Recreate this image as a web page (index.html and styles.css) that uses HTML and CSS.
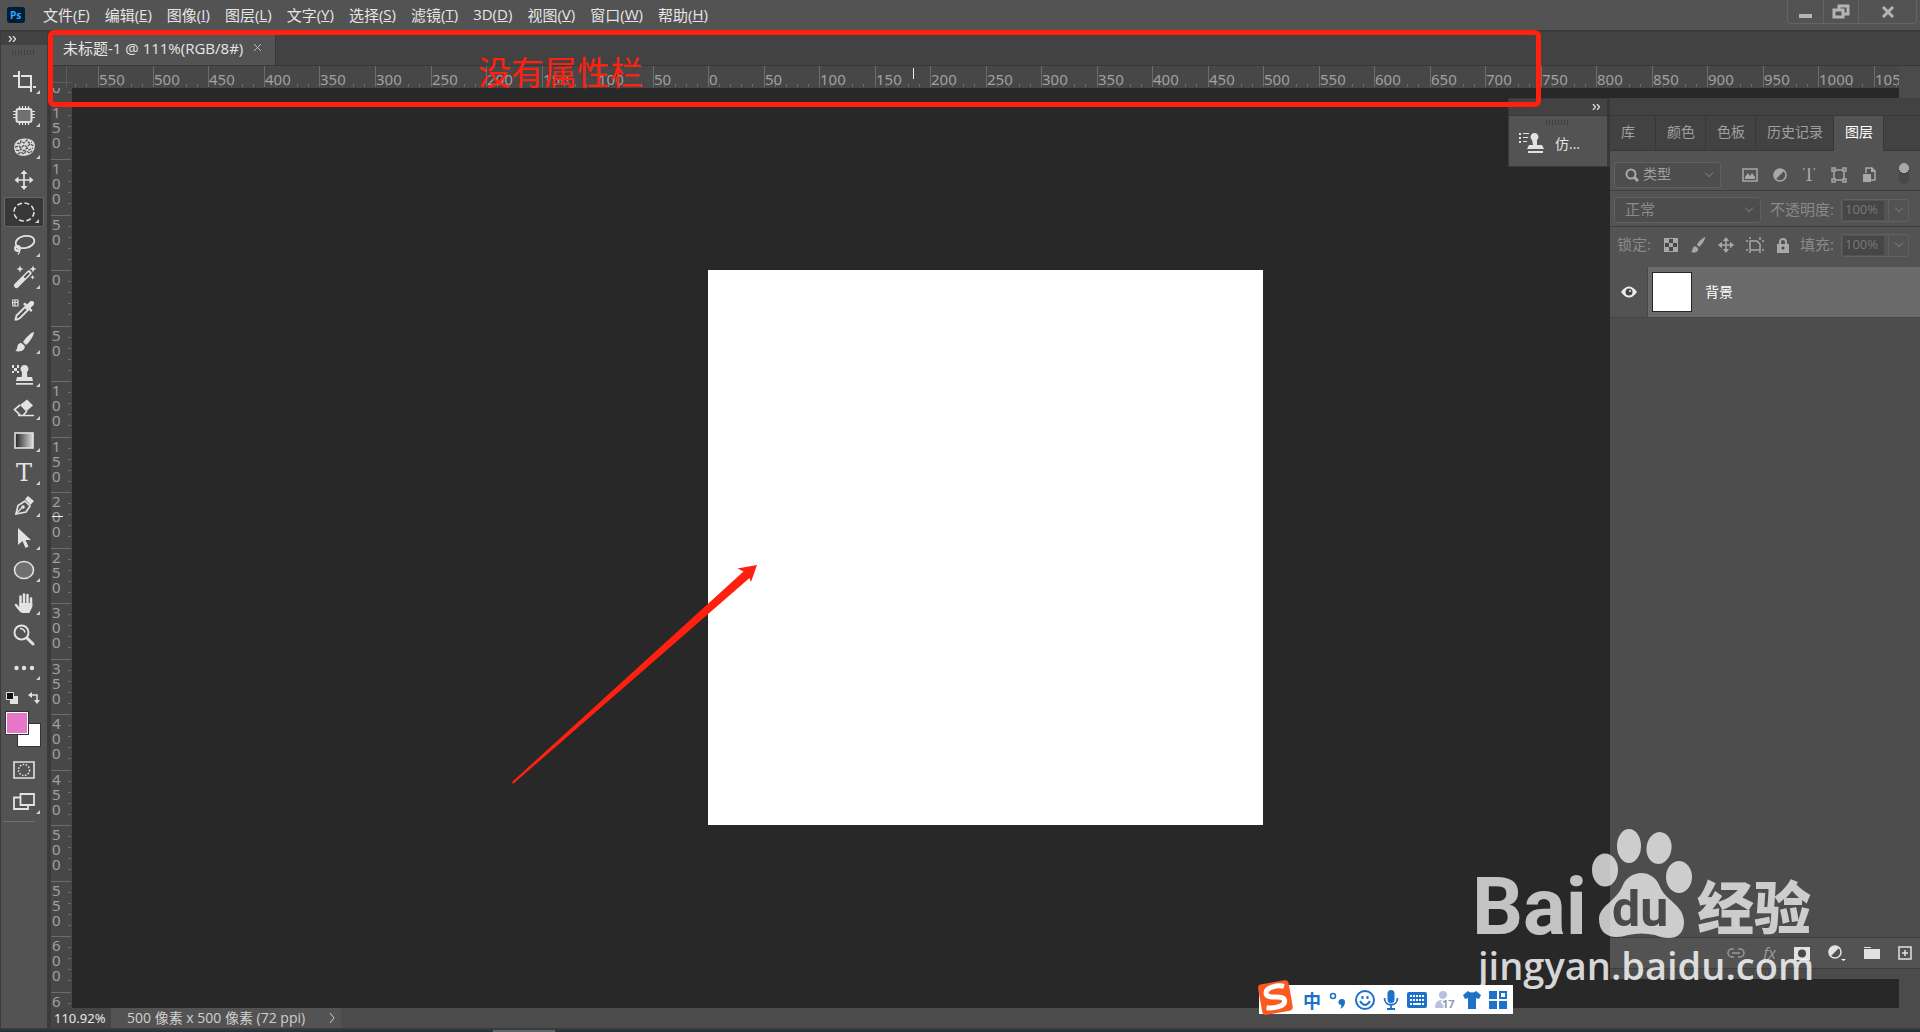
FILE: index.html
```html
<!DOCTYPE html>
<html lang="zh-CN">
<head>
    <meta charset="UTF-8">
    <meta name="viewport" content="width=device-width, initial-scale=1.0">
    <title>未标题-1 @ 111%(RGB/8#)</title>
    <link rel="stylesheet" href="styles.css">
</head>
<body>
    <!-- Menu bar -->
    <header class="menubar">
        <svg class="app-logo" width="18" height="16" viewBox="0 0 18 16"><rect width="18" height="16" rx="3" fill="#001e36"/><text x="3" y="12" font-size="10" font-weight="700" fill="#31a8ff">Ps</text></svg>
        <nav class="menu">
            <button>文件(<u>F</u>)</button>
            <button>编辑(<u>E</u>)</button>
            <button>图像(<u>I</u>)</button>
            <button>图层(<u>L</u>)</button>
            <button>文字(<u>Y</u>)</button>
            <button>选择(<u>S</u>)</button>
            <button>滤镜(<u>T</u>)</button>
            <button>3D(<u>D</u>)</button>
            <button>视图(<u>V</u>)</button>
            <button>窗口(<u>W</u>)</button>
            <button>帮助(<u>H</u>)</button>
        </nav>
        <div class="window-controls">
            <button aria-label="最小化"><svg width="14" height="14"><path d="M0 9h13v4H0z" fill="#b4b4b4"/></svg></button>
            <button aria-label="还原"><svg width="18" height="16" fill="none" stroke="#b4b4b4" stroke-width="3"><path d="M7 5V2h9v8h-4"/><path d="M2 6h9v7H2z"/></svg></button>
            <button class="close" aria-label="关闭"><svg width="14" height="12"><path d="M2 1l10 10M12 1L2 11" stroke="#b4b4b4" stroke-width="3"/></svg></button>
        </div>
    </header>

    <div class="workspace">
        <!-- Tools -->
        <aside class="toolbar">
            <button class="collapse" aria-label="折叠"><svg width="8" height="6"><path d="M1 0l2.500 3L1 6M5 0l2.500 3L5 6" fill="none" stroke="#ddd" stroke-width="1.300"/></svg></button>
            <div class="grip"></div>
            <div class="tools">
                <button class="tool more" aria-label="裁剪"><svg viewBox="0 0 24 24"><path d="M7 1v16h12M1 6h5M9 6h10v16M21 17h3" fill="none" stroke="#e2e2e2" stroke-width="2"/></svg></button>
                <button class="tool more" aria-label="修补"><svg viewBox="0 0 24 24"><rect x="4.500" y="6" width="15" height="13" rx="2" fill="#707070" stroke="#e2e2e2" stroke-width="2"/><path d="M7.500 3v3M10.500 3v3M13.500 3v3M16.500 3v3M7.500 19v3M10.500 19v3M13.500 19v3M16.500 19v3M1 8.500h3M1 11.500h3M1 14.500h3M20 8.500h3M20 11.500h3M20 14.500h3" stroke="#e2e2e2" stroke-width="1.200"/></svg></button>
                <button class="tool more" aria-label="海绵"><svg viewBox="0 0 24 24"><path d="M2 13Q2 4 12 3.500Q22 3 23 10Q23 20 12 21Q3 21 2 13z" fill="#dadada"/><g fill="none" stroke="#555" stroke-width="1.300"><path d="M5 8l3 1 1-3 3 2 3-3 2 3 3-1M3 12l4-1 2 2 3-3 3 2 3-3 4 2M4 15l3 1 2-2 3 2 3-3 2 2 4-2M6 19l3-2 3 2 2-3 4 2 2-2" stroke-dasharray="3 1"/></g></svg></button>
                <button class="tool" aria-label="移动"><svg viewBox="0 0 24 24"><path d="M12 4v16M4 12h16" stroke="#e2e2e2" stroke-width="1.700"/><path d="M12 2l3.500 4h-7zM12 22l3.500-4h-7zM2.500 12l4-3.500v7zM21.500 12l-4-3.500v7z" fill="#e2e2e2"/></svg></button>
                <button class="tool more selected" aria-label="椭圆选框"><svg viewBox="0 0 24 24"><ellipse cx="12" cy="12" rx="10" ry="9" fill="none" stroke="#e2e2e2" stroke-width="1.500" stroke-dasharray="5 2.500"/></svg></button>
                <button class="tool more" aria-label="套索"><svg viewBox="0 0 24 24" fill="none" stroke="#e2e2e2" stroke-width="1.800"><ellipse cx="13" cy="9" rx="9.500" ry="6" transform="rotate(-12 13 9)"/><circle cx="5.500" cy="15.500" r="2.500"/><path d="M3 14c5 0 6 4 3 7.500M8 14l-4 3" stroke-width="1.300"/></svg></button>
                <button class="tool more" aria-label="魔棒"><svg viewBox="0 0 24 24"><path d="M4.500 20.500L17 8" stroke="#e2e2e2" stroke-width="5" stroke-linecap="round"/><path d="M13 12l3.500-3.500" stroke="#535353" stroke-width="2.200" stroke-linecap="round"/><path d="M8 .5l1 2.500 2.500 1L9 5 8 7.500 7 5 4.500 4 7 3zM21 .5l1 2.500 2.500 1L22 5l-1 2.500L20 5l-2.500-1L20 3zM20.500 10l.7 1.500 1.500.7-1.500.7-.7 1.600-.7-1.600-1.500-.7 1.500-.7z" fill="#e2e2e2"/></svg></button>
                <button class="tool" aria-label="吸管"><svg viewBox="1 0 24 24"><path d="M4.500 21.500l1-4L14 9l3 3-8 8-3 1.500z" fill="none" stroke="#e2e2e2" stroke-width="1.800"/><path d="M12 6l8 8 1.500-1.500-2-2.500 3-3c2-3-1-5-3.500-3.500l-3 3-2-2z" fill="#e2e2e2"/><path d="M1 2h6v6H2zM4 2v6M1 4.500h6" fill="none" stroke="#e2e2e2" stroke-width="1.200"/></svg></button>
                <button class="tool more" aria-label="画笔"><svg viewBox="0 0 24 24"><path d="M22 2c-2 0-8 5-11 10l3 3c4-3 8-10 8-13zM9.500 13c-3 0-4 2-4.300 4.500-.2 2-1 3-2.200 3.300 5 1.700 10 0 9.800-4.800z" fill="#e2e2e2"/></svg></button>
                <button class="tool more" aria-label="仿制图章"><svg viewBox="1 0 24 24"><path d="M11 9a4 4 0 1 1 5 0l.3 5H21l1 4H5l1-4h4.700zM5 20h17v1.800H5z" fill="#e2e2e2"/><path d="M1 2h2v3H1zM6 2h2v3H6zM3 5h3v3H3zM1 8h2v2H1zM6 8h2v2H6z" fill="#e2e2e2"/></svg></button>
                <button class="tool more" aria-label="橡皮擦"><svg viewBox="0 0 24 24"><path d="M8 9l7-5.500 6 6-7 6z" fill="#e2e2e2"/><path d="M8 9l-5.500 4.500 6 6H11l4-4.500M6 19.500h16" fill="none" stroke="#e2e2e2" stroke-width="1.700"/></svg></button>
                <button class="tool more" aria-label="渐变"><svg viewBox="0 0 24 24"><defs><linearGradient id="grad"><stop stop-color="#222"/><stop offset="1" stop-color="#ddd"/></linearGradient></defs><rect x="3" y="5" width="18" height="15" fill="url(#grad)" stroke="#e2e2e2" stroke-width="1.600"/></svg></button>
                <button class="tool more" aria-label="文字"><svg viewBox="0 0 24 24"><text x="4" y="20" font-size="24" class="type-icon">T</text></svg></button>
                <button class="tool more" aria-label="钢笔"><svg viewBox="0 0 24 24"><path d="M4 21l2-8.500 7-4.500 5 5-4 6z" fill="none" stroke="#e2e2e2" stroke-width="1.700"/><path d="M4 21l6-6.500" stroke="#e2e2e2" stroke-width="1.300"/><circle cx="11" cy="14" r="1.800" fill="#e2e2e2"/><path d="M13 6l3-3 6 5-3.500 4z" fill="#e2e2e2"/></svg></button>
                <button class="tool more" aria-label="路径选择"><svg viewBox="0 0 24 24"><path d="M6 2l13 12h-5.500l3 6.500-3 1.500-3-7L6 19z" fill="#e2e2e2"/></svg></button>
                <button class="tool more" aria-label="椭圆"><svg viewBox="0 0 24 24"><ellipse cx="12" cy="12" rx="9.500" ry="8.500" fill="#707070" stroke="#e2e2e2" stroke-width="1.600"/></svg></button>
                <button class="tool more" aria-label="抓手"><svg viewBox="0 0 24 24"><path d="M9 20L4 14M8.500 14V5.500M12 13V3.500M15.500 13V4M19 14V7.500" fill="none" stroke="#e2e2e2" stroke-width="2.500" stroke-linecap="round"/><path d="M7.300 12h13v4l-3 6H10l-5-5 2.300-1z" fill="#e2e2e2"/></svg></button>
                <button class="tool" aria-label="缩放"><svg viewBox="0 0 24 24"><circle cx="9.500" cy="9.500" r="7" fill="none" stroke="#e2e2e2" stroke-width="2"/><path d="M8 5.500q4 0 5 4" fill="none" stroke="#e2e2e2" stroke-width="1.500"/><path d="M15 15l6 6" stroke="#e2e2e2" stroke-width="3" stroke-linecap="round"/></svg></button>
                <button class="tool more" aria-label="编辑工具栏"><svg viewBox="0 0 24 24" fill="#e2e2e2"><circle cx="4.500" cy="12" r="2.200"/><circle cx="12" cy="12" r="2.200"/><circle cx="20" cy="12" r="2.200"/></svg></button>
            </div>
            <div class="swatch-row">
                <button aria-label="默认颜色"><svg width="12" height="12"><path d="M4 4h8v8H4z" fill="#e2e2e2"/><path d="M.5.500h7v7h-7z" fill="#111" stroke="#e2e2e2"/></svg></button>
                <button aria-label="切换颜色"><svg width="12" height="12"><path d="M3 3h6v6" fill="none" stroke="#e2e2e2" stroke-width="1.500"/><path d="M0 3l4-3v6zM9 12L6 8h6z" fill="#e2e2e2"/></svg></button>
            </div>
            <div class="swatches">
                <button class="swatch back" aria-label="背景色"></button>
                <button class="swatch front" aria-label="前景色"></button>
            </div>
            <div class="modes">
                <button class="tool" aria-label="快速蒙版"><svg viewBox="0 0 24 24" fill="none" stroke="#e2e2e2"><path d="M2 4h20v16H2z" stroke-width="1.600"/><circle cx="12" cy="12" r="5.500" stroke-width="1.500" stroke-dasharray="1.500 1.500"/></svg></button>
                <button class="tool more" aria-label="屏幕模式"><svg viewBox="0 0 24 24" fill="none" stroke="#e2e2e2" stroke-width="1.800"><path d="M8 7.500H2V19h14v-4"/><path d="M8.500 4H22v11H8.500z"/></svg></button>
            </div>
            <hr>
        </aside>

        <!-- Document window -->
        <main class="document">
            <div class="tabs">
                <div class="doc-tab">未标题-1 @ 111%(RGB/8#)<button aria-label="关闭文档"><svg width="9" height="9"><path d="M1 1l7 7M8 1L1 8" stroke="#bbb"/></svg></button></div>
            </div>
            <div class="ruler-row">
                <div class="ruler-origin"></div>
                <svg id="ruler-x" class="ruler"></svg>
                <div class="ruler-end"></div>
            </div>
            <div class="stage">
                <svg id="ruler-y" class="ruler"></svg>
                <div class="artboard" id="artboard"></div>
                <div class="scrollbar"></div>

                <!-- Collapsed panel -->
                <section class="mini-dock">
                    <button class="collapse" aria-label="展开"><svg width="8" height="6"><path d="M1 0l2.500 3L1 6M5 0l2.500 3L5 6" fill="none" stroke="#ddd" stroke-width="1.300"/></svg></button>
                    <div class="mini-panel">
                        <div class="grip"></div>
                        <button><svg width="26" height="24" fill="#e2e2e2"><path d="M0 2h2v2H0zM4 2h6v1H4zM0 6h2v2H0zM4 6h5v1H4zM0 10h2v2H0zM4 10h4v1H4z"/><path d="M13 9a4 4 0 1 1 5 0v5h5l2 4H8l2-4h4zM9 20h15v2H9z"/></svg>仿...</button>
                    </div>
                </section>

                <!-- Layers panel -->
                <section class="dock">
                    <div class="dock-head"></div>
                    <div class="panel-tabs">
                        <button>库</button>
                        <button>颜色</button>
                        <button>色板</button>
                        <button>历史记录</button>
                        <button class="active">图层</button>
                    </div>
                    <div class="panel-row filter-row">
                        <label class="drop filter" aria-label="图层过滤"><svg width="14" height="14" fill="none" stroke="#a8a8a8"><circle cx="6" cy="6" r="4.500" stroke-width="2"/><path d="M9 9l4 4" stroke-width="3"/></svg><select><option>类型</option></select></label>
                        <div class="filter-icons">
                            <button aria-label="像素"><svg width="16" height="14"><path d="M1 1h14v12H1z" fill="none" stroke="#a8a8a8" stroke-width="1.500"/><path d="M3 11V9l3-4 2 3 2-3 3 4v2z" fill="#a8a8a8"/></svg></button>
                            <button aria-label="调整"><svg width="14" height="14"><circle cx="7" cy="7" r="6" fill="none" stroke="#a8a8a8" stroke-width="1.500"/><path d="M2.500 11.500a6 6 0 0 1 9-9z" fill="#a8a8a8"/></svg></button>
                            <button aria-label="文字图层"><svg width="14" height="14"><text x="1" y="13" font-size="18" class="type-icon dim">T</text></svg></button>
                            <button aria-label="形状"><svg width="16" height="16" fill="none" stroke="#a8a8a8" stroke-width="1.500"><path d="M3 3h10v10H3z"/><path d="M1 1h3v3H1zM12 1h3v3h-3zM1 12h3v3H1zM12 12h3v3h-3z" fill="#535353"/></svg></button>
                            <button aria-label="智能对象"><svg width="14" height="15"><path d="M4 6V1h6l3 3v9H9" fill="none" stroke="#a8a8a8" stroke-width="1.500"/><path d="M9 0v5h5M1 7h8v8H1z" fill="#a8a8a8"/></svg></button>
                        </div>
                        <input type="checkbox" class="switch" aria-label="过滤开关" checked>
                    </div>
                    <div class="panel-row">
                        <label class="drop blend" aria-label="混合模式"><select><option>正常</option></select></label>
                        <label class="dim-label" for="opacity">不透明度:</label>
                        <span class="percent"><input id="opacity" value="100%"><button aria-label="不透明度滑块"></button></span>
                    </div>
                    <div class="panel-row lock-row">
                        <span class="dim-label">锁定:</span>
                        <div class="lock-icons">
                            <button aria-label="锁定透明像素"><svg width="14" height="14"><path d="M0 0h14v14H0z" fill="#a8a8a8"/><path d="M5 1h4v4H5zM1 5h4v4H1zM9 5h4v4H9zM5 9h4v4H5z" fill="#484848"/></svg></button>
                            <button aria-label="锁定图像像素"><svg width="16" height="16" viewBox="2 1 21 21"><path d="M22 1c-2 0-8 5-11 10l3 3c4-3 8-10 8-13zM9.500 13c-3 0-4 2-4.300 4.500-.2 2-1 3-2.200 3.300 5 1.700 10 0 9.800-4.800z" fill="#a8a8a8"/></svg></button>
                            <button aria-label="锁定位置"><svg width="16" height="16" viewBox="2 2 20 20"><path d="M12 4v16M4 12h16" stroke="#a8a8a8" stroke-width="2"/><path d="M12 2l4 5H8zM12 22l4-5H8zM2 12l5-4v8zM22 12l-5-4v8z" fill="#a8a8a8"/></svg></button>
                            <button aria-label="防止嵌套"><svg width="18" height="16" fill="none" stroke="#a8a8a8" stroke-width="1.500"><path d="M4 0v2M0 4h2M4 4h7l3 3v6H4zM14 0v3M18 4h-2M4 14v2M14 14v2M0 13h2M16 13h2"/></svg></button>
                            <button aria-label="全部锁定"><svg width="14" height="15"><path d="M4 6V4a3 3 0 0 1 6 0v2" fill="none" stroke="#a8a8a8" stroke-width="2"/><path d="M1 6h12v9H1z" fill="#a8a8a8"/><circle cx="7" cy="10" r="1.500" fill="#484848"/></svg></button>
                        </div>
                        <label class="dim-label" for="fill">填充:</label>
                        <span class="percent"><input id="fill" value="100%"><button aria-label="填充滑块"></button></span>
                    </div>
                    <div class="layer">
                        <button class="eye" aria-label="可见性"><svg width="16" height="12"><path d="M0 6q8-11 16 0q-8 11-16 0z" fill="#eee"/><circle cx="8" cy="6" r="3.500" fill="#444"/><circle cx="9" cy="5" r="1" fill="#eee"/></svg></button>
                        <div class="layer-body"><span class="thumb"></span><span class="layer-name">背景</span></div>
                    </div>
                    <div class="layer-space"></div>
                    <div class="panel-foot">
                        <button aria-label="链接图层"><svg width="18" height="10" fill="none" stroke="#999" stroke-width="1.500"><path d="M7 1H5a4 4 0 0 0 0 8h2M11 1h2a4 4 0 0 1 0 8h-2M5 5h8"/></svg></button>
                        <button class="fx" aria-label="图层样式">fx</button>
                        <button aria-label="添加蒙版"><svg width="16" height="13"><path d="M0 0h16v13H0z" fill="#e2e2e2"/><circle cx="8" cy="6.500" r="4" fill="#484848"/></svg></button>
                        <button aria-label="调整图层"><svg width="18" height="16"><circle cx="7" cy="7" r="6" fill="none" stroke="#e2e2e2" stroke-width="1.500"/><path d="M2.500 11.500a6 6 0 0 1 9-9z" fill="#e2e2e2"/><path d="M13 14h5l-2.500 2z" fill="#fff"/></svg></button>
                        <button aria-label="新建组"><svg width="16" height="12"><path d="M0 0h7v1H0zM0 2h16v10H0z" fill="#e2e2e2"/></svg></button>
                        <button aria-label="新建图层"><svg width="14" height="14" fill="none" stroke="#e2e2e2" stroke-width="1.500"><path d="M1 1h12v12H1zM7 4v6M4 7h6"/></svg></button>
                    </div>
                    <div class="dock-end"><div class="grip"></div></div>
                </section>
            </div>
            <footer class="status">
                <input class="zoom-value" aria-label="缩放比例" value="110.92%">
                <div class="doc-size">500 像素 x 500 像素 (72 ppi)</div>
                <button aria-label="更多信息"><svg width="6" height="12"><path d="M1 1l4 5-4 5" fill="none" stroke="#ccc"/></svg></button>
            </footer>
        </main>
    </div>
    <div class="taskbar"><span></span></div>

    <!-- Annotations over the window -->
    <div class="note-box"><p>没有属性栏</p></div>
    <svg class="note-arrow" width="246" height="220"><path d="M0 217L231.500 6.500L225.500 3.500L245 0L239 17L237.500 13L1 219z" fill="#ff2010"/></svg>

    <svg class="watermark" width="350" height="180">
        <g fill="#fff" fill-opacity=".72">
            <ellipse cx="129" cy="59" rx="13" ry="16.500"/>
            <ellipse cx="153" cy="35" rx="12" ry="17"/>
            <ellipse cx="183" cy="37" rx="12.500" ry="16" transform="rotate(8 183 37)"/>
            <ellipse cx="203" cy="66" rx="13" ry="16"/>
            <path d="M146 76C153 58 177 57 184 76C190 90 208 94 208 111C208 128 193 130 179 124C170 122 161 122 152 124C137 129 123 125 123 108C123 95 140 90 146 76z"/>
            <text class="wm-bai" x="-4" y="123">Bai</text>
            <text class="wm-cn" x="221" y="118">经验</text>
        </g>
        <text class="wm-url" x="2" y="169">jingyan.baidu.com</text>
        <text class="wm-du" x="136" y="115">du</text>
    </svg>

    <!-- Input method bar -->
    <div class="ime">
        <svg class="ime-logo" width="38" height="38"><g transform="rotate(-10 19 19)"><rect x="3" y="3" width="31" height="31" rx="4" fill="#fa5a1e"/><path d="M29 9C22 6 10 7 10 13C10 20 27 16 27 23C27 29 15 29 8 27" fill="none" stroke="#fff" stroke-width="5"/></g></svg>
        <button aria-label="中文">中</button>
        <button aria-label="标点"><svg width="18" height="20"><circle cx="4" cy="6" r="2.500" fill="none" stroke="#1c72c8" stroke-width="1.500"/><path d="M13 9a3 3 0 0 1 3 3q0 5-5 7 2-3 1-4a3 3 0 0 1 1-6" fill="#1c72c8"/></svg></button>
        <button aria-label="表情"><svg width="20" height="20" fill="none" stroke="#1c72c8" stroke-width="2"><circle cx="10" cy="10" r="9"/><path d="M5 11q5 8 10 0M7.500 6v3M12.500 6v3"/></svg></button>
        <button aria-label="语音"><svg width="16" height="20"><rect x="4.500" width="7" height="13" rx="3.500" fill="#1c72c8"/><path d="M1.500 8c0 9 13 9 13 0M8 15v4M4 19h8" fill="none" stroke="#1c72c8" stroke-width="1.800"/></svg></button>
        <button aria-label="键盘"><svg width="20" height="16"><rect width="20" height="16" rx="2" fill="#1c72c8"/><path d="M3 4h14M3 8h14" stroke="#fff" stroke-width="2" stroke-dasharray="2 1"/><path d="M3 12h14" stroke="#fff" stroke-width="2" stroke-dasharray="2 1 8 1"/></svg></button>
        <button aria-label="账号"><svg width="20" height="20"><circle cx="8" cy="5" r="4" fill="#b8c2dc"/><path d="M0 18q0-9 8-8l4 1v7z" fill="#b8c2dc"/><text x="7" y="18" class="ime-level">17</text></svg></button>
        <button aria-label="皮肤"><svg width="18" height="18"><path d="M5 0q4 3 8 0l5 4-2 4-3-1v11H5V7L2 8 0 4z" fill="#1c72c8"/></svg></button>
        <button aria-label="工具箱"><svg width="18" height="18" fill="#1c72c8"><path d="M0 0h8v8H0zM0 10h8v8H0zM10 10h8v8h-8z"/><path d="M11 1h6v6h-6z" fill="none" stroke="#1c72c8" stroke-width="2"/></svg></button>
    </div>

    <script src="rulers.js"></script>
</body>
</html>
```
FILE: styles.css
```css
* {
    box-sizing: border-box;
}
body {
    margin: 0;
    min-height: 100vh;
    display: flex;
    flex-direction: column;
    position: relative;
    overflow: hidden;
    background: #282828;
    color: #e6e6e6;
    font-family: "Open Sans", "Noto Sans CJK SC", sans-serif;
    font-size: 14px;
}
button, input, select {
    margin: 0;
    padding: 0;
    border: none;
    background: none;
    color: inherit;
    font: inherit;
}
button {
    display: flex;
    align-items: center;
    justify-content: center;
}
svg {
    display: block;
    flex: none;
}

/* Menu bar */
.menubar {
    display: flex;
    align-items: center;
    height: 30px;
    padding-left: 7px;
    background: #535353;
}
.menu {
    display: flex;
    gap: 15px;
    height: 28px;
    margin-left: 18px;
    font-size: 15px;
}
.menu button {
    height: 26px;
}
.window-controls {
    display: flex;
    align-self: flex-start;
    height: 24px;
    margin-left: auto;
    margin-right: 3px;
    border: 1px solid #646464;
    border-top: none;
    border-radius: 0 0 4px 4px;
}
.window-controls button {
    width: 35px;
}
.window-controls button + button {
    border-left: 1px solid #646464;
}
.window-controls .close {
    width: 58px;
}

.workspace {
    display: flex;
    flex: 1;
    border-top: 2px solid #3a3a3a;
}

/* Tools */
.toolbar {
    width: 50px;
    background: #535353;
    border-left: 1px solid #3a3a3a;
    border-right: 3px solid #3a3a3a;
}
.collapse {
    width: 100%;
    height: 13px;
    padding-left: 7px;
    justify-content: flex-start;
    background: #424242;
}
.grip {
    width: 24px;
    height: 5px;
    margin: 5px auto 11px 11px;
    background: repeating-linear-gradient(90deg, #404040 0 1px, #535353 1px 3px);
}
.tools {
    display: grid;
    grid-template-rows: repeat(19, 1fr);
    height: 618px;
}
.tool {
    position: relative;
    width: 40px;
    height: 30px;
    margin: auto auto auto 3px;
    border-radius: 2px;
}
.tool svg {
    width: 24px;
    height: 24px;
}
.tool.selected {
    background: #383838;
    border: 1px solid #666;
}
.more::after {
    content: "";
    position: absolute;
    right: 4px;
    bottom: 3px;
    border-left: 4px solid transparent;
    border-bottom: 4px solid #d0d0d0;
}
.type-icon {
    font-family: "DejaVu Serif", serif;
    fill: #e2e2e2;
}
.type-icon.dim {
    fill: #a8a8a8;
}
.swatch-row {
    display: flex;
    gap: 10px;
    margin: 8px 0 7px 5px;
}
.swatches {
    display: grid;
    width: 36px;
    height: 36px;
    margin-left: 4px;
}
.swatch {
    grid-area: 1 / 1;
    width: 24px;
    height: 24px;
    border: 1px solid #333;
}
.swatch.front {
    background: #e676c8;
    box-shadow: inset 0 0 0 1px #fff;
}
.swatch.back {
    place-self: end;
    background: #fff;
}
.modes {
    display: grid;
    gap: 2px;
    padding-top: 8px;
}
.toolbar hr {
    width: 32px;
    margin: 4px 0 0 2px;
    border: none;
    border-top: 1px solid #707070;
}

/* Document */
.document {
    display: flex;
    flex: 1;
    flex-direction: column;
    min-width: 0;
    padding-left: 1px;
    background: #3a3a3a;
}
.tabs {
    display: flex;
    height: 34px;
    background: #424242;
    border-bottom: 1px solid #383838;
}
.doc-tab {
    display: flex;
    align-items: center;
    gap: 10px;
    padding: 0 13px 2px 12px;
    background: #535353;
    border-right: 1px solid #383838;
    font-size: 15px;
}
.ruler-row {
    display: grid;
    grid-template-columns: 21px 1fr 21px;
    height: 22px;
    background: #474747;
}
.ruler {
    width: 100%;
    height: 100%;
    overflow: hidden;
    background: #474747;
    font-family: "Noto Sans", sans-serif;
    font-size: 15px;
    fill: #a0a0a0;
}
.tick {
    fill: #6c6c6c;
}
.cursor {
    fill: #f0f0f0;
}
.ruler-origin {
    background: linear-gradient(#666, #666) 15px 0 / 1px 100% no-repeat, linear-gradient(#666, #666) 0 16px / 100% 1px no-repeat, #474747;
    opacity: 0.7;
}
.ruler-end, .scrollbar {
    background: #4b4b4b;
}
.stage {
    display: grid;
    flex: 1;
    grid-template-columns: 21px 1fr 289px 21px;
    grid-template-rows: minmax(0, 1fr);
    background: #282828;
}
.stage > * {
    grid-row: 1;
}
.artboard {
    grid-column: 2 / 4;
    place-self: center;
    width: 555px;
    height: 555px;
    margin-bottom: 1px;
    background: #fff;
}
.scrollbar {
    grid-column: 4;
}
.mini-dock {
    grid-column: 2;
    place-self: start end;
    width: 102px;
    margin-top: 10px;
    border: 1px solid #383838;
    border-right: 3px solid #383838;
}
.mini-dock .collapse {
    height: 16px;
    padding-left: 83px;
}
.mini-panel {
    height: 51px;
    background: #535353;
    border-top: 1px solid #383838;
}
.mini-panel .grip {
    margin: 4px auto;
}
.mini-panel button {
    gap: 10px;
    margin-left: 10px;
    padding-top: 2px;
}

/* Layers panel */
.dock {
    display: flex;
    flex-direction: column;
    grid-column: 3 / 5;
    margin: 10px 0 29px;
    background: #535353;
    color: #a0a0a0;
}
.dock-head {
    height: 18px;
    background: #424242;
    border-bottom: 1px solid #383838;
}
.panel-tabs {
    display: flex;
    height: 35px;
    background: #424242;
    border-bottom: 1px solid #383838;
}
.panel-tabs button {
    padding: 0 10px 5px 11px;
    border-right: 1px solid #383838;
}
.panel-tabs button:first-child {
    padding-right: 20px;
}
.panel-tabs .active {
    margin-bottom: -1px;
    background: #535353;
    color: #fff;
}
.panel-row {
    display: flex;
    align-items: center;
    height: 36px;
    padding: 3px 11px 0 4px;
    border-bottom: 1px solid #3e3e3e;
}
.filter-row {
    height: 40px;
    padding-top: 8px;
}
.drop {
    position: relative;
    display: flex;
    align-items: center;
    height: 26px;
    padding-left: 10px;
    background: #4d4d4d;
    border: 1px solid #616161;
    border-radius: 3px;
}
.drop svg {
    margin-right: 4px;
}
.drop select {
    flex: 1;
    padding-bottom: 2px;
    appearance: none;
}
.drop::after, .percent button::after {
    content: "";
    width: 5px;
    height: 5px;
    margin: -4px 8px 0;
    border: solid #777;
    border-width: 0 1px 1px 0;
    transform: rotate(45deg);
}
.percent button::after {
    flex: none;
    margin: -4px 0 0;
}
.filter {
    width: 107px;
}
.blend {
    width: 147px;
}
.blend select {
    color: #8a8a8a;
    font-size: 15px;
}
.filter-icons {
    display: flex;
    gap: 15px;
    margin-left: 21px;
}
.switch {
    appearance: none;
    width: 10px;
    height: 21px;
    margin: 0 0 2px auto;
    background: radial-gradient(circle at 5px 5px, #a8a8a8 5px, transparent 5px), #484848;
    border-radius: 5px;
}
.dim-label {
    padding-bottom: 3px;
    color: #8a8a8a;
    font-size: 15px;
    line-height: 20px;
}
.blend + .dim-label {
    margin-left: 9px;
}
.percent {
    display: flex;
    height: 23px;
    margin-left: auto;
    border: 1px solid #616161;
    border-radius: 3px;
    color: #787878;
}
.percent input {
    width: 46px;
    padding: 0 0 2px 2px;
    background: #464646;
    border: solid #535353;
    border-width: 1px 4px 1px 1px;
    font-size: 13px;
}
.percent button {
    width: 20px;
    border-left: 1px solid #616161;
}
.lock-row {
    height: 40px;
    padding: 0 11px 4px 7px;
    border-bottom: none;
}
.lock-icons {
    display: flex;
    gap: 12px;
    margin: 0 10px 0 13px;
}
.layer {
    display: flex;
    height: 51px;
    border-bottom: 1px solid #464646;
    color: #fff;
}
.eye {
    width: 38px;
    border-right: 1px solid #464646;
}
.layer-body {
    display: flex;
    flex: 1;
    align-items: center;
    gap: 13px;
    padding-left: 4px;
    background: #6a6a6a;
}
.layer-name {
    padding-bottom: 3px;
}
.thumb {
    width: 40px;
    height: 40px;
    background: #fff;
    border: 1px solid #282828;
}
.layer-space {
    flex: 1;
    background: #4d4d4d;
}
.panel-foot {
    display: flex;
    align-items: center;
    justify-content: flex-end;
    gap: 18px;
    height: 32px;
    padding-right: 8px;
    border-top: 1px solid #3e3e3e;
    border-bottom: 1px solid #3e3e3e;
}
.fx {
    color: #999;
    font-style: italic;
    font-size: 16px;
}
.dock-end {
    height: 10px;
    background: #4b4b4b;
}
.dock-end .grip {
    margin: 2px auto;
}

/* Status bar */
.status {
    display: flex;
    height: 20px;
    background: #4b4b4b;
    line-height: 20px;
}
.zoom-value {
    width: 60px;
    padding-left: 3px;
    background: #454545;
    font-family: "Noto Sans", sans-serif;
    font-size: 13px;
}
.doc-size {
    padding: 0 18px 0 16px;
    background: #535353;
    color: #d0d0d0;
}
.status button {
    width: 18px;
    background: #535353;
}
.taskbar {
    height: 4px;
    background: #25333d;
    border-top: 2px solid #3a3a3a;
}
.taskbar span {
    display: block;
    width: 62px;
    height: 2px;
    margin-left: 493px;
    background: #5c6770;
}

/* Annotations */
.note-box {
    position: absolute;
    top: 30px;
    left: 48px;
    right: 379px;
    height: 77px;
    border: 5px solid #ff2010;
    border-radius: 6px;
    pointer-events: none;
}
.note-box p {
    margin: 14px 0 0 425px;
    color: #ff2010;
    font-size: 33px;
    line-height: 48px;
}
.note-arrow {
    position: absolute;
    top: 565px;
    left: 512px;
}
.watermark {
    position: absolute;
    right: 94px;
    bottom: 41px;
    overflow: visible;
}
.wm-bai, .wm-du {
    font-family: Roboto, sans-serif;
    font-weight: 700;
    font-size: 80px;
}
.wm-du {
    font-size: 50px;
    fill: #4a4a4a;
}
.wm-cn {
    font-family: "Noto Sans CJK SC", sans-serif;
    font-weight: 900;
    font-size: 57px;
}
.wm-url {
    fill: #fff;
    fill-opacity: 0.82;
    font-size: 38px;
    font-weight: 600;
}

/* Input method bar */
.ime {
    position: absolute;
    right: 407px;
    bottom: 18px;
    display: flex;
    align-items: center;
    gap: 8px;
    height: 29px;
    padding-right: 6px;
    background: #fff;
}
.ime button {
    color: #1c72c8;
    font-size: 18px;
    font-weight: 700;
}
.ime-logo {
    margin: -4px 0 0 -2px;
}
.ime-level {
    fill: #8e99b8;
    stroke: #fff;
    stroke-width: 3px;
    paint-order: stroke;
    font-size: 11px;
}
```
FILE: rulers.js
```js
// Draws both rulers from the artboard position (500 document px wide)
const NS = 'http://www.w3.org/2000/svg';
const artboard = document.getElementById('artboard');
const rulerX = document.getElementById('ruler-x');
const rulerY = document.getElementById('ruler-y');

function addRect(svg, cls, x, y, w, h) {
    const rect = document.createElementNS(NS, 'rect');
    rect.setAttribute('class', cls);
    rect.setAttribute('x', x);
    rect.setAttribute('y', y);
    rect.setAttribute('width', w);
    rect.setAttribute('height', h);
    svg.appendChild(rect);
}

function addText(svg, text, x, y) {
    const el = document.createElementNS(NS, 'text');
    el.setAttribute('x', x);
    el.setAttribute('y', y);
    el.textContent = text;
    svg.appendChild(el);
}

function drawRulers() {
    const art = artboard.getBoundingClientRect();
    const boxX = rulerX.getBoundingClientRect();
    const boxY = rulerY.getBoundingClientRect();
    const scale = art.width / 500;
    rulerX.innerHTML = '';
    rulerY.innerHTML = '';

    for (let value = -700; value <= 1100; value += 10) {
        const major = value % 50 === 0;
        const x = Math.round(art.left - boxX.left + value * scale);
        const y = Math.round(art.top - boxY.top + value * scale);
        if (x >= 0 && x < boxX.width) {
            addRect(rulerX, 'tick', x, major ? 0 : 18, 1, major ? 21 : 3);
            if (major) {
                addText(rulerX, Math.abs(value), x + 1, 19);
            }
        }
        if (y >= 0 && y < boxY.height) {
            addRect(rulerY, 'tick', major ? 0 : 17, y, major ? 20 : 3, 1);
        }
        if (major) {
            String(Math.abs(value)).split('').forEach((digit, i) => {
                const base = y + 15 + i * 15;
                if (base > 0 && base < boxY.height + 2) {
                    addText(rulerY, digit, 1, base);
                }
            });
        }
    }

    // cursor position markers
    addRect(rulerX, 'cursor', Math.round(art.left - boxX.left + 185 * scale), 2, 1, 11);
    addRect(rulerY, 'cursor', 1, Math.round(art.top - boxY.top + 222 * scale), 11, 1);
}

drawRulers();
window.addEventListener('resize', drawRulers);
```
